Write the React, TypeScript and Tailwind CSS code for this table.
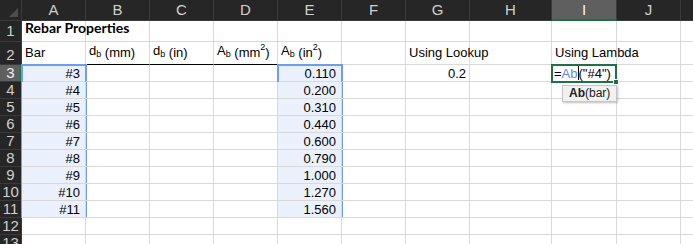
const cols = ["A", "B", "C", "D", "E", "F", "G", "H", "I", "J", ""];

const bars = ["#3", "#4", "#5", "#6", "#7", "#8", "#9", "#10", "#11"];
const areas = ["0.110", "0.200", "0.310", "0.440", "0.600", "0.790", "1.000", "1.270", "1.560"];

const cell = "border-r border-b border-[#d9d9d9] whitespace-nowrap";
const rowHead = "bg-[#262626] border-r border-b border-[#3a3a3a] text-[#d0d0d0] text-[15px] flex items-end justify-center leading-[16px]";

function Sub({ base, sub }: { base: string; sub: string }) {
    return (
        <span>
            {base}
            <span className="text-[9px] inline-block translate-y-[2px]">{sub}</span>
        </span>
    );
}

function Sup({ v }: { v: string }) {
    return <span className="text-[9px] inline-block -translate-y-[5px]">{v}</span>;
}

export default function App() {
    const rows = [];
    for (let r = 3; r <= 13; r++) {
        const i = r - 3;
        const isData = i < bars.length;
        rows.push(
            <div
                key={"h" + r}
                className={
                    r === 3
                        ? "bg-[#5f5f5f] border-r-2 border-r-[#1e7145] border-b border-b-[#3a3a3a] text-[#f0f0f0] text-[15px] flex items-end justify-center pl-[1px] leading-[16px]"
                        : rowHead
                }
            >
                {r}
            </div>
        );
        for (let c = 0; c < 11; c++) {
            let content: React.ReactNode = null;
            let extra = "";
            let overlay: React.ReactNode = null;
            if (isData && (c === 0 || c === 4)) {
                content = c === 0 ? bars[i] : areas[i];
                extra = "bg-[#eaf1fd] pr-[5px]";
                if (i === 0) {
                    overlay = (
                        <div className="absolute -left-px -top-px w-[66px] h-[154px] border-2 border-[#6b9ef0] pointer-events-none" />
                    );
                }
            }
            if (r === 3 && c === 6) {
                content = "0.2";
                extra = "pr-[3px]";
            }
            if (r === 3 && c === 8) {
                rows.push(
                    <div key={r + "-" + c} className={`${cell} relative`}>
                        <div className="absolute -left-px -top-px w-[66px] h-[19px] border-2 border-[#1e7145] bg-white z-20 flex items-end pl-[1px] leading-[15px] whitespace-nowrap">
                            <span>=</span>
                            <span className="text-[#5b86f0]">Ab</span>
                            <span className="inline-block w-px h-[14px] bg-black mb-[1px]" />
                            <span>("#4")</span>
                            <div className="absolute -right-[4px] -bottom-[4px] w-[6px] h-[6px] bg-[#1e7145] border border-white" />
                            <div className="absolute left-[9px] top-[19px] px-[6px] h-[17px] flex items-center bg-[#f1f1f1] border border-[#c6c6c6] shadow-[1px_1px_2px_rgba(0,0,0,0.25)] text-[12px] text-[#222]">
                                <span className="font-bold">Ab</span>(bar)
                            </div>
                        </div>
                    </div>
                );
                continue;
            }
            rows.push(
                <div key={r + "-" + c} className={`${cell} ${extra} relative flex items-end justify-end leading-[15px]`}>
                    {content}
                    {overlay}
                </div>
            );
        }
    }

    return (
        <div
            className="w-[693px] h-[244px] overflow-hidden bg-white text-[13px] text-black"
            style={{ fontFamily: '"Liberation Sans", Arial, sans-serif' }}
        >
            <div className="grid grid-cols-[22px_64px_64px_64px_64px_64px_64px_64px_82px_65px_64px_40px] grid-rows-[21px_21px_23px_repeat(11,17px)]">
                {/* header row */}
                <div className="bg-[#262626] border-r border-b border-[#3a3a3a] relative">
                    <div className="absolute right-[3px] bottom-[3px] w-0 h-0 border-l-[9px] border-l-transparent border-b-[9px] border-b-[#4d4d4d]" />
                </div>
                {cols.map((c) =>
                    c === "I" ? (
                        <div key={c} className="bg-[#5f5f5f] border-r border-[#3a3a3a] border-b-2 border-b-[#1e7145] text-[#f2f2f2] text-[15px] flex items-center justify-center pt-[1px]">
                            {c}
                        </div>
                    ) : (
                        <div key={c} className="bg-[#262626] border-r border-b border-[#3a3a3a] text-[#d0d0d0] text-[15px] flex items-center justify-center pt-[1px]">
                            {c}
                        </div>
                    )
                )}

                {/* row 1 */}
                <div className={`${rowHead} pb-[2px]`}>1</div>
                <div
                    className={`${cell} flex items-end pl-[3px] pb-[3px] font-bold text-[14px]`}
                    style={{ fontFamily: "Lato, 'Liberation Sans', sans-serif" }}
                >
                    Rebar Properties
                </div>
                {Array.from({ length: 10 }).map((_, k) => (
                    <div key={"r1" + k} className={cell} />
                ))}

                {/* row 2 */}
                <div className={`${rowHead} pb-[1px]`}>2</div>
                <div className="border-r border-[#d9d9d9] border-b border-b-black flex items-end pl-[3px] pb-[4px] leading-[15px]">Bar</div>
                <div className="border-r border-[#d9d9d9] border-b border-b-black flex items-end pl-[3px] pb-[4px] leading-[15px] whitespace-nowrap">
                    <Sub base="d" sub="b" />&nbsp;(mm)
                </div>
                <div className="border-r border-[#d9d9d9] border-b border-b-black flex items-end pl-[3px] pb-[4px] leading-[15px] whitespace-nowrap">
                    <Sub base="d" sub="b" />&nbsp;(in)
                </div>
                <div className="border-r border-[#d9d9d9] border-b border-b-black flex items-end pl-[3px] pb-[4px] leading-[15px] whitespace-nowrap">
                    <Sub base="A" sub="b" />&nbsp;(mm<Sup v="2" />)
                </div>
                <div className={`${cell} flex items-end pl-[3px] pb-[4px] leading-[15px]`}>
                    <Sub base="A" sub="b" />&nbsp;(in<Sup v="2" />)
                </div>
                <div className={cell} />
                <div className={`${cell} flex items-end pl-[3px] pb-[4px] leading-[15px]`}>Using Lookup</div>
                <div className={cell} />
                <div className={`${cell} flex items-end pl-[3px] pb-[4px] leading-[15px]`}>Using Lambda</div>
                <div className={cell} />
                <div className={cell} />

                {rows}
            </div>
        </div>
    );
}
